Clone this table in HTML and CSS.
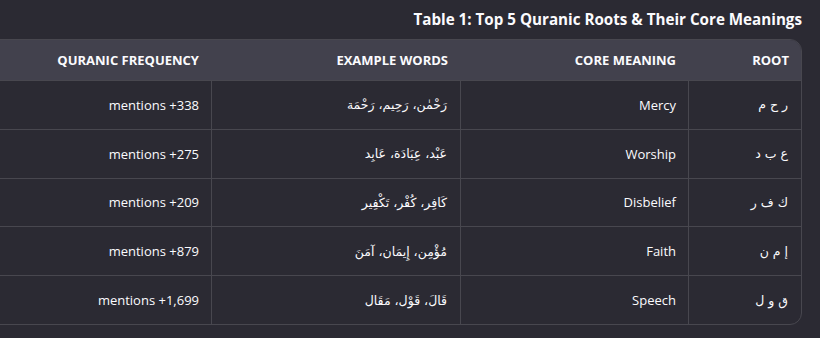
FILE: index.html
```html
<!DOCTYPE html>
<html lang="en">
<head>
<meta charset="utf-8">
<link rel="stylesheet" href="styles.css">
</head>
<body>
<div class="page">
  <h3 class="caption">Table 1: Top 5 Quranic Roots &amp; Their Core Meanings</h3>
  <div class="wrap">
    <table class="roots">
      <colgroup>
        <col class="c-freq"><col class="c-ex"><col class="c-core"><col class="c-root">
      </colgroup>
      <thead>
        <tr><th>QURANIC FREQUENCY</th><th>EXAMPLE WORDS</th><th>CORE MEANING</th><th>ROOT</th></tr>
      </thead>
      <tbody>
        <tr><td>mentions +338</td><td class="ar" dir="rtl">رَحْمٰن، رَحِيم، رَحْمَة</td><td>Mercy</td><td class="ar" dir="rtl">ر ح م</td></tr>
        <tr><td>mentions +275</td><td class="ar" dir="rtl">عَبْد، عِبَادَة، عَابِد</td><td>Worship</td><td class="ar" dir="rtl">ع ب د</td></tr>
        <tr><td>mentions +209</td><td class="ar" dir="rtl">كَافِر، كُفْر، تَكْفِير</td><td>Disbelief</td><td class="ar" dir="rtl">ك ف ر</td></tr>
        <tr><td>mentions +879</td><td class="ar" dir="rtl">مُؤْمِن، إِيمَان، آمَنَ</td><td>Faith</td><td class="ar" dir="rtl">إ م ن</td></tr>
        <tr><td>mentions +1,699</td><td class="ar" dir="rtl">قَالَ، قَوْل، مَقَال</td><td>Speech</td><td class="ar" dir="rtl">ق و ل</td></tr>
      </tbody>
    </table>
  </div>
</div>
</body>
</html>
```

FILE: styles.css
```css
html, body {
  margin: 0;
  padding: 0;
  background: #2b2a33;
}
body {
  font-family: "Open Sans", "DejaVu Sans", sans-serif;
  color: #fbfbfe;
  overflow: hidden;
}
.page {
  display: flex;
  flex-direction: column;
  align-items: flex-end;
  padding: 8px 18px 0 0;
  overflow: hidden;
}
.caption {
  margin: 0;
  font-size: 15.2px;
  font-weight: 700;
  line-height: 22px;
  color: #fbfbfe;
}
.wrap {
  display: flex;
  justify-content: flex-end;
  width: 100%;
  margin-top: 9px;
}
.roots {
  flex: none;
  width: 844px;
  table-layout: fixed;
  border-collapse: separate;
  border-spacing: 0;
  border: 1px solid #48474f;
  border-radius: 12px;
  overflow: hidden;
}
.c-freq { width: 254px; }
.c-ex { width: 249px; }
.c-core { width: 228px; }
.c-root { width: 113px; }
.roots th {
  background: #42414d;
  height: 40px;
  padding: 0 12px;
  text-align: right;
  font-size: 13px;
  font-weight: 700;
  color: #fbfbfe;
}
.roots td {
  height: 47.8px;
  padding: 0 12px;
  text-align: right;
  font-size: 13px;
  border-top: 1px solid #48474f;
  border-left: 1px solid #48474f;
}
.roots td:first-child { border-left: none; }
.roots td.ar {
  text-align: right;
  font-family: "DejaVu Sans", sans-serif;
  font-size: 12.5px;
}
```
